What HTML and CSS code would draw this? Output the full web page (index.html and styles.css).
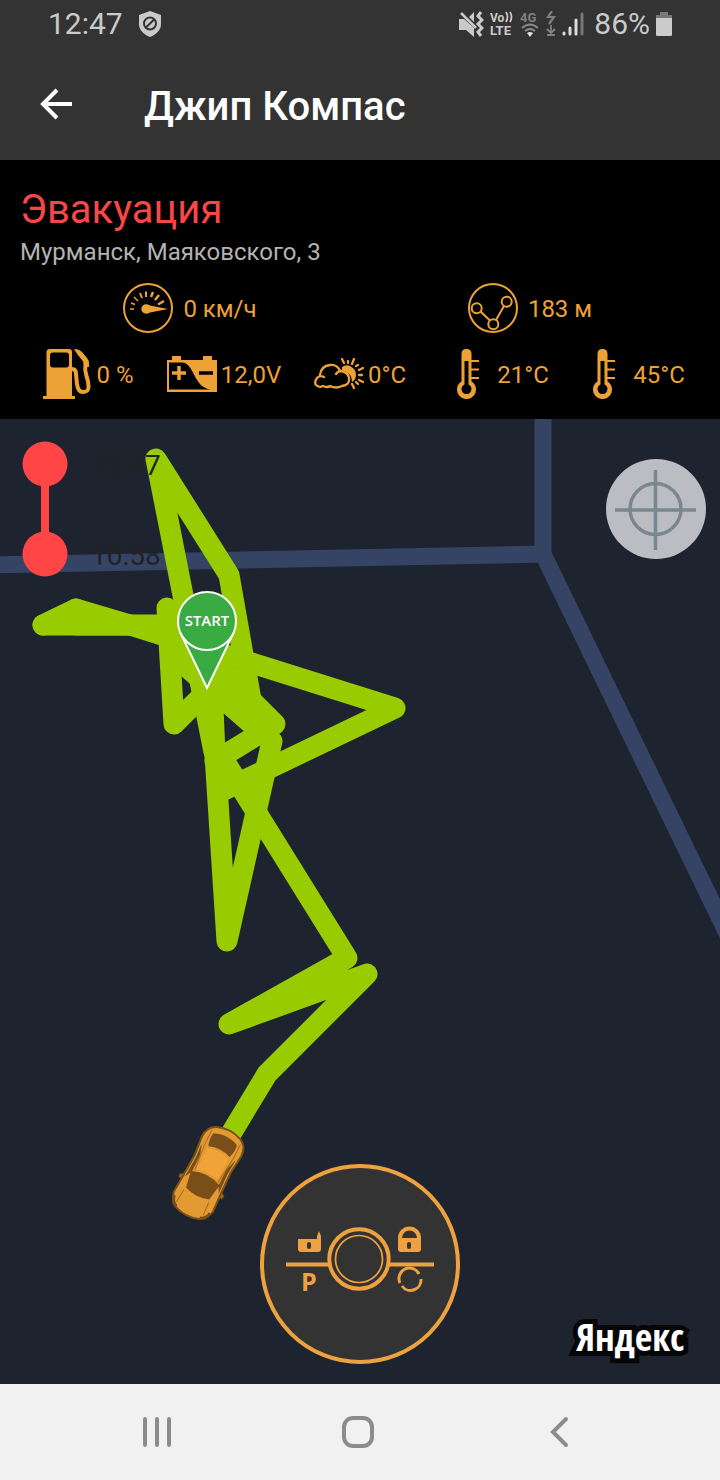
FILE: index.html
```html
<!DOCTYPE html>
<html lang="ru">
<head>
<meta charset="utf-8">
<meta name="viewport" content="width=device-width, initial-scale=1">
<title>Джип Компас</title>
<link rel="stylesheet" href="styles.css">
</head>
<body>
<div class="screen">
  <div class="status-bar">
    <div class="status-group">
      <span class="status-text">12:47</span>
      <svg class="shield" width="22" height="26" viewBox="0 0 22 26">
        <path d="M11 0 22 4v9c0 6-4.500 10.500-11 13C4.500 23.500 0 19 0 13V4z" fill="#cacaca"/>
        <circle cx="11" cy="12.500" r="6" fill="none" stroke="#333" stroke-width="2"/>
        <path d="M7 16.500 15 8.500" stroke="#333" stroke-width="2"/>
      </svg>
    </div>
    <div class="status-group status-icons">
      <svg width="25" height="26" viewBox="0 0 25 26">
        <path d="M0 8h5l10 9v9l-8-7H0zM10 6l5-5v10z" fill="#cacaca"/>
        <path d="M2 2 17 17" stroke="#cacaca" stroke-width="2.500"/>
        <path d="M22 1l-3 4 4 4-4 4 4 4-4 4 3 4" fill="none" stroke="#cacaca" stroke-width="3"/>
      </svg>
      <svg width="24" height="28" viewBox="0 0 24 28">
        <text class="net-text" x="0" y="12" font-size="12">Vo</text>
        <path d="M16 2q3 5 0 10M20 2q3 5 0 10" fill="none" stroke="#cacaca" stroke-width="1.800"/>
        <text class="net-text" x="0" y="25" font-size="13">LTE</text>
      </svg>
      <svg width="20" height="28" viewBox="0 0 20 28">
        <text class="net-text net-dim" x="0" y="12" font-size="13">4G</text>
        <path d="M2 18q8-7 16 0M5 21q5-4 10 0" fill="none" stroke="#8a8a8a" stroke-width="2"/>
        <path d="M7 23q3-2 6 0l-3 4z" fill="#e0e0e0"/>
      </svg>
      <svg width="10" height="26" viewBox="0 0 10 26" fill="none" stroke="#808080" stroke-width="1.800">
        <path d="M6 0 2 6h6l-5 7" stroke-width="2.200"/>
        <path d="M5 14v8M1 18l4 4 4-4M1 24h8"/>
      </svg>
      <svg width="22" height="26" viewBox="0 0 22 26" stroke-width="3" stroke-linecap="round">
        <path d="M2 22v1M8 17v6M14 9v14" stroke="#dcdcdc"/>
        <path d="M20 3v20" stroke="#777"/>
      </svg>
      <span class="status-text percent">86%</span>
      <svg width="16" height="26" viewBox="0 0 16 26">
        <path d="M0 8V4h4V1h8v3h4v4z" fill="#777"/>
        <path d="M0 7h16v17q0 1-1 1H1q-1 0-1-1z" fill="#cacaca"/>
      </svg>
    </div>
  </div>

  <header class="app-bar">
    <button class="plain-button" type="button" aria-label="Назад">
      <svg width="34" height="32" viewBox="0 0 34 32" fill="none" stroke="#fff" stroke-width="4">
        <path d="M32 16H3M17 2 3 16l14 14"/>
      </svg>
    </button>
    <h1 class="app-title">Джип Компас</h1>
  </header>

  <section class="info">
    <h2 class="info-title">Эвакуация</h2>
    <p class="info-address">Мурманск, Маяковского, 3</p>
    <div class="stats stats-main">
      <div class="stat">
        <svg class="stat-icon" viewBox="0 0 50 50">
          <circle cx="25" cy="25" r="24" fill="none" stroke="#eda236" stroke-width="2"/>
          <path d="M23 21.300q2 0 4 1.200l18 3.500-18 3.500q-2 1.200-4 1.200a4.700 4.700 0 0 1 0-9.400z" fill="#eda236"/>
          <g stroke="#eda236" fill="none">
            <path d="M7 26h4M8 20l4 1.500M11 14l4 4" stroke-width="1.500"/>
            <path d="M17 10l2 5M23 8.500v5.500" stroke-width="2"/>
            <path d="M30 9l-2 5M36 12l-4 5M41 18l-6 3.500" stroke-width="2.500"/>
          </g>
        </svg>
        <span class="stat-value">0 км/ч</span>
      </div>
      <div class="stat">
        <svg class="stat-icon" viewBox="0 0 50 50" fill="none" stroke="#eda236" stroke-width="2">
          <circle cx="25" cy="25" r="24"/>
          <circle cx="8.700" cy="25.300" r="5"/>
          <circle cx="25.300" cy="41.300" r="5"/>
          <circle cx="38.700" cy="18.700" r="5"/>
          <path d="M12.500 28.500 22 37.500M28 37 36 23"/>
        </svg>
        <span class="stat-value">183 м</span>
      </div>
    </div>
    <div class="stats stats-detail">
      <div class="stat">
        <svg class="stat-icon" viewBox="0 0 50 50">
          <path d="M8 0h19q3 0 3 3v44h3v3H1v-3h3.500V3Q4.500 0 8 0z" fill="#eda236"/>
          <rect x="8" y="3.500" width="19" height="15" rx="3" fill="#000"/>
          <path d="M30 20q4 0 4 5l1 10q1 8 6 8 6 0 5.500-6 0-4-2-10t-1-13" fill="none" stroke="#eda236" stroke-width="4"/>
          <path d="M32 0q5 0 8 3l5 6q2 2 2 6v3h-5q0-5-2-7-4-4-8-11z" fill="#eda236"/>
        </svg>
        <span class="stat-value">0 %</span>
      </div>
      <div class="stat">
        <svg class="stat-icon" viewBox="0 0 50 50">
          <path d="M0 11h5V7h9v4h22V7h9v4h5v32H0z" fill="#eda236"/>
          <path d="M2 13.500h13c5 0 8 4 12 12s8 14 17 15H2z" fill="#000"/>
          <path d="M5 24h14M12 17v14" stroke="#eda236" stroke-width="3.500"/>
          <path d="M32 24h14" stroke="#000" stroke-width="3.500"/>
        </svg>
        <span class="stat-value">12,0V</span>
      </div>
      <div class="stat">
        <svg class="stat-icon" viewBox="0 0 50 50">
          <path d="M28 18q4-3 8-1 6 3 6 9 0 5-4 7 0-9-10-12z" fill="#eda236"/>
          <g fill="none" stroke="#eda236" stroke-width="2.300" stroke-linecap="round">
            <path d="M10 28q-4-2-7 1-3 4-1 7 3 3 7 1 4 2 7 0 6 3 12 0 8-1 7-8-1-6-8-7-3 0-5 3M6 26q1-9 10-10 7-1 10 6"/>
            <path d="M28 10l2 4M34 12v2M40 10l-2 5M44 16l-2 1M49 19l-4 2M45 26h3M45 31l4 2M42 33l2 2M38 35l2 4"/>
          </g>
        </svg>
        <span class="stat-value">0°C</span>
      </div>
      <div class="stat">
        <svg class="stat-icon" viewBox="0 0 50 50">
          <path d="M18.500 5q0-5 5-5t5 5v27.500a9.500 9.500 0 1 1-10 0z" fill="#eda236"/>
          <path d="M21.500 12h4v23.500a5 5 0 1 1-4 0z" fill="#000"/>
          <path d="M28 12h8M28 20.500h8M28 29h8" stroke="#eda236" stroke-width="2"/>
        </svg>
        <span class="stat-value">21°C</span>
      </div>
      <div class="stat">
        <svg class="stat-icon" viewBox="0 0 50 50">
          <path d="M18.500 5q0-5 5-5t5 5v27.500a9.500 9.500 0 1 1-10 0z" fill="#eda236"/>
          <path d="M21.500 12h4v23.500a5 5 0 1 1-4 0z" fill="#000"/>
          <path d="M28 12h8M28 20.500h8M28 29h8" stroke="#eda236" stroke-width="2"/>
        </svg>
        <span class="stat-value">45°C</span>
      </div>
    </div>
  </section>

  <main class="map">
    <svg class="map-canvas" viewBox="0 419 720 965" preserveAspectRatio="xMidYMid slice" role="img" aria-label="Карта маршрута">
      <path class="road" d="M-10 565 543 554 543 409M543 554 740 960"/>
      <g class="track">
        <path d="M43 625H190"/>
        <path d="M43 625 76 609 130 625 395 708 224 790"/>
        <path d="M76 609 76 625 130 625"/>
        <path d="M251 700 229 575 156 459 214 752"/>
        <path d="M211 660 215 755 227 941 272 741"/>
        <path d="M167 608 174 724 215 683"/>
        <path d="M172 654 262 733"/>
        <path d="M215 664 275 724 215 761"/>
        <path d="M222 757 347 958 229 1024 367 974 267 1074 232 1132"/>
      </g>
      <g class="pin">
        <path d="M181 634 207 688 233 634z"/>
        <circle cx="207" cy="621" r="29"/>
        <text x="207" y="626">START</text>
      </g>
      <g transform="translate(208 1173) rotate(27)">
        <path d="M-20 10-25 14l1 3 6-1M20 10l5 4-1 3-6-1" fill="#a06a24" stroke="#6b4716" stroke-width="1"/>
        <path d="M-13-45Q0-50 13-45 22-41 22-30L20-10 21 14 22 32Q20 42 13 45 0 50-13 45-20 42-22 32L-21 14-20-10-22-30Q-22-41-13-45z" fill="#e49a33" stroke="#7b5119" stroke-width="2"/>
        <path d="M-19-24-15-12-15 6-19 14-18-8zM19-24 15-12 15 6 19 14 18-8z" fill="#7b5119"/>
        <path d="M-13-38Q0-44 13-38 15-33 12-24 0-29-12-24-15-33-13-38z" fill="#7a4e18"/>
        <path d="M-16 6Q0-1 16 6L13 23Q0 28-13 23z" fill="#7a4e18"/>
        <path d="M-12-22Q0-26 12-22L12 2Q0-1-12 2z" fill="#f0a339"/>
        <path d="M-16-40-16-24-13 4M16-40 16-24 13 4M-14 26-15 40M14 26 15 40" fill="none" stroke="#a66c22" stroke-width="1"/>
        <path d="M-20 35q1 7 7 9M20 35q-1 7-7 9" fill="none" stroke="#7a4e18" stroke-width="3"/>
      </g>
    </svg>

    <div class="map-top">
      <div class="timeline">
        <svg width="46" height="136" viewBox="0 0 46 136" fill="#ff4545">
          <path d="M19 22h8v90h-8z"/>
          <circle cx="23" cy="23" r="22.500"/>
          <circle cx="23" cy="113" r="22.500"/>
        </svg>
        <div class="timeline-times">
          <time>12:47</time>
          <time>10:58</time>
        </div>
      </div>
      <button class="plain-button locate" type="button" aria-label="Моё местоположение">
        <svg width="100" height="100" viewBox="0 0 100 100" fill="none" stroke="#7a8791" stroke-width="3.500">
          <circle cx="49.500" cy="50" r="25.500"/>
          <path d="M9 51h81M49.500 11v80"/>
        </svg>
      </button>
    </div>

    <div class="map-bottom">
      <button class="plain-button remote" type="button" aria-label="Управление">
        <svg width="200" height="200" viewBox="0 0 200 200">
          <circle cx="100" cy="100" r="98" fill="#333" stroke="#eda23f" stroke-width="4"/>
          <g fill="none" stroke="#eda23f">
            <circle cx="99" cy="95" r="29.700" stroke-width="4"/>
            <circle cx="99" cy="95" r="23.500" stroke-width="1.700"/>
            <path d="M26 100.500h42M130 100.500h44" stroke-width="4"/>
            <path d="M140 75v-1a9.500 9.500 0 0 1 19 0v1" stroke-width="4"/>
            <path d="M140 119a10.500 10.500 0 0 1 19-9" stroke-width="3"/>
            <path d="M161 115a10.500 10.500 0 0 1-19 7" stroke-width="3"/>
          </g>
          <g fill="#eda23f">
            <path d="M38 75h19v-3l2-5 2 5v13q0 3-3 3H41q-3 0-3-3z"/>
            <path d="M138 74h23v11q0 3-3 3h-17q-3 0-3-3z"/>
            <text class="parking" x="41" y="127">P</text>
          </g>
          <g fill="#333">
            <rect x="47" y="78" width="4" height="7" rx="2"/>
            <rect x="147" y="78" width="4" height="7" rx="2"/>
          </g>
        </svg>
      </button>
      <a class="yandex" href="#">Яндекс</a>
    </div>
  </main>

  <nav class="nav-bar">
    <button class="plain-button" type="button" aria-label="Недавние">
      <svg width="32" height="34" viewBox="0 0 32 34" stroke="#8c8c8c" stroke-width="4" stroke-linecap="round">
        <path d="M4 4v26M16 4v26M28 4v26"/>
      </svg>
    </button>
    <button class="plain-button" type="button" aria-label="Главная">
      <svg width="34" height="34" viewBox="0 0 34 34" fill="none" stroke="#8c8c8c" stroke-width="4">
        <rect x="3" y="3" width="28" height="28" rx="9"/>
      </svg>
    </button>
    <button class="plain-button" type="button" aria-label="Назад">
      <svg width="34" height="34" viewBox="0 0 34 34" fill="none" stroke="#8c8c8c" stroke-width="4" stroke-linecap="round">
        <path d="M24 4 11 17l13 13"/>
      </svg>
    </button>
  </nav>
</div>
</body>
</html>
```

FILE: styles.css
```css
* {
  box-sizing: border-box;
}

body {
  margin: 0;
  font-family: Roboto, "Liberation Sans", sans-serif;
}

svg {
  display: block;
}

.screen {
  display: flex;
  flex-direction: column;
  min-height: 100vh;
  background: #000;
}

.plain-button {
  display: flex;
  padding: 0;
  border: 0;
  background: none;
  cursor: pointer;
}

/* Status bar */
.status-bar {
  display: flex;
  align-items: center;
  justify-content: space-between;
  height: 48px;
  padding: 0 48px;
  background: #333;
}

.status-group {
  display: flex;
  align-items: center;
  gap: 16px;
}

.status-icons {
  gap: 6px;
}

.status-text {
  color: #cacaca;
  font-size: 30px;
  line-height: 48px;
}

.percent {
  margin-left: 4px;
}

.net-text {
  fill: #cacaca;
  font-weight: 700;
}

.net-dim {
  fill: #808080;
}

/* App bar */
.app-bar {
  display: flex;
  align-items: center;
  gap: 70px;
  height: 112px;
  padding: 0 40px;
  background: #333;
}

.app-title {
  margin: 0;
  padding-top: 6px;
  color: #fff;
  font-size: 40px;
  font-weight: 500;
  line-height: 48px;
}

/* Vehicle info */
.info {
  padding: 26px 20px 20px;
  background: #000;
}

.info-title {
  margin: 0;
  color: #f94747;
  font-size: 40px;
  font-weight: 400;
  line-height: 48px;
}

.info-address {
  margin: 3px 0 0;
  color: #b3b3b3;
  font-size: 24px;
  line-height: 30px;
}

.stats {
  display: grid;
  margin-top: 16px;
  color: #eda236;
  font-size: 24px;
  line-height: 28px;
}

.stats-main {
  grid-template-columns: repeat(2, 1fr);
}

.stats-detail {
  grid-template-columns: repeat(5, 1fr);
}

.stat {
  display: flex;
  align-items: center;
  justify-content: center;
  gap: 4px;
  white-space: nowrap;
}

.stats-main .stat {
  gap: 10px;
}

.stat-icon {
  flex: none;
  width: 50px;
  height: 50px;
}

.stat-value {
  padding-top: 2px;
}

/* Map */
.map {
  position: relative;
  display: flex;
  flex: 1;
  flex-direction: column;
  justify-content: space-between;
  min-height: 480px;
  background: #1e242f;
}

.map-canvas {
  position: absolute;
  inset: 0;
  width: 100%;
  height: 100%;
}

.road {
  fill: none;
  stroke: #354465;
  stroke-width: 17;
  stroke-linejoin: round;
}

.track {
  fill: none;
  stroke: #99cc00;
  stroke-width: 21;
  stroke-linecap: round;
  stroke-linejoin: round;
}

.pin {
  fill: #3aaa43;
  stroke: #fff;
  stroke-width: 2;
}

.pin text {
  fill: #fff;
  stroke: none;
  font-family: "Open Sans", sans-serif;
  font-size: 15px;
  font-weight: 600;
  text-anchor: middle;
}

.map-top,
.map-bottom {
  position: relative;
  display: grid;
}

.map-top {
  grid-template-columns: 1fr auto;
  align-items: start;
  padding: 22px 14px 0 22px;
}

.timeline {
  display: flex;
  gap: 23px;
}

.timeline-times {
  display: flex;
  flex-direction: column;
  justify-content: space-between;
  padding: 7px 0 3px;
  color: #222225;
  font-size: 28px;
  line-height: 36px;
}

.locate {
  margin-top: 18px;
  border-radius: 50%;
  background: #bbbdc2;
}

.map-bottom {
  grid-template-columns: 1fr auto 1fr;
  align-items: end;
  padding: 0 36px 20px;
}

.remote {
  grid-column: 2;
  border-radius: 50%;
}

.parking {
  font-family: "Open Sans", sans-serif;
  font-size: 25px;
  font-weight: 700;
}

.yandex {
  justify-self: end;
  color: #fff;
  font-family: "Open Sans Condensed", "Liberation Sans Narrow", "Noto Sans", sans-serif;
  font-size: 38px;
  font-weight: 300;
  line-height: 56px;
  text-decoration: none;
  paint-order: stroke fill;
  -webkit-text-stroke: 10px #050608;
  stroke-linejoin: round;
}

/* System navigation */
.nav-bar {
  display: grid;
  grid-template-columns: repeat(3, 1fr);
  align-items: center;
  justify-items: center;
  height: 96px;
  padding: 0 60px 0 56px;
  background: #f1f1f1;
}
```
